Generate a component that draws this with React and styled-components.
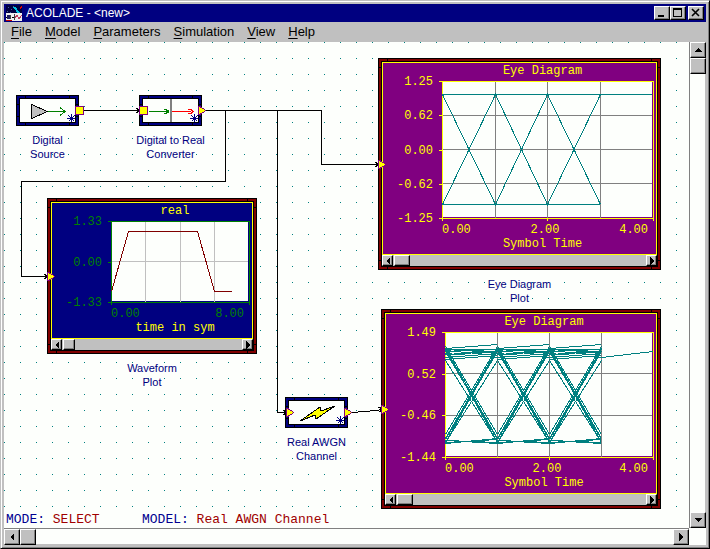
import React from 'react';
import styled, { createGlobalStyle } from 'styled-components';

const PAPER = '#fdfffc';
const SILVER = '#c0c0c0';
const NAVY = '#000080';
const MAROON = '#800000';
const TEAL = '#008080';
const YELLOW = '#ffff00';

const GlobalStyle = createGlobalStyle`
  * {
    box-sizing: border-box;
  }
  body {
    margin: 0;
    font-family: 'Liberation Sans', Arial, sans-serif;
  }
  button {
    font: inherit;
    color: inherit;
    padding: 0;
  }
  svg {
    display: block;
  }
`;

const Window = styled.div`
  display: flex;
  flex-direction: column;
  height: 100vh;
  padding: 3px;
  background: ${SILVER};
  border: 1px solid;
  border-color: ${SILVER} #000 #000 ${SILVER};
  box-shadow: inset 1px 1px #fff, inset -1px -1px #808080;
`;

const TitleBar = styled.header`
  display: flex;
  align-items: center;
  flex: none;
  height: 18px;
  padding: 0 2px;
  background: ${NAVY};
  color: #fff;
`;

const Title = styled.h1`
  flex: 1;
  margin: 0 0 0 4px;
  font-size: 12px;
  font-weight: normal;
  line-height: 16px;
`;

const Bevel = styled.button`
  display: grid;
  place-items: center;
  flex: none;
  width: ${(props) => props.$w}px;
  height: ${(props) => props.$h}px;
  background: ${SILVER};
  border: 1px solid;
  border-color: #fff #000 #000 #fff;
  box-shadow: inset -1px -1px #808080;
`;

const WindowButtons = styled.div`
  display: flex;
  & > :last-child {
    margin-left: 2px;
  }
`;

const MenuBar = styled.nav`
  display: flex;
  flex: none;
  height: 20px;
  background: ${SILVER};
`;

const MenuItem = styled.button`
  padding: 0 6px 0 7px;
  border: 0;
  background: none;
  color: #000;
  font-size: 13px;
  line-height: 18px;
  &::first-letter {
    text-decoration: underline;
    text-underline-offset: 2px;
  }
`;

const Body = styled.div`
  display: grid;
  grid-template-columns: minmax(0, 1fr) 17px;
  grid-template-rows: minmax(0, 1fr) 17px;
  flex: 1;
  min-height: 0;
  background: ${PAPER};
`;

const Workspace = styled.main`
  display: flex;
  flex-direction: column;
  min-height: 0;
`;

const Canvas = styled.div`
  position: relative;
  flex: 1;
  overflow: hidden;
  background: linear-gradient(to bottom, transparent 1px, ${PAPER} 1px) 0 0 / 16px 16px,
    linear-gradient(to right, ${TEAL} 1px, ${PAPER} 1px) 0 0 / 16px 16px;
`;

const Wires = styled.svg`
  position: absolute;
  top: 0;
  left: 0;
  pointer-events: none;
`;

const Status = styled.footer`
  display: flex;
  flex: none;
  height: 15px;
  padding-left: 2px;
  background: ${PAPER};
  color: #a00000;
  font-family: 'Liberation Mono', 'Courier New', monospace;
  font-size: 13px;
  line-height: 14px;
`;

const StatusField = styled.div`
  min-width: 136px;
  white-space: pre;
`;

const StatusName = styled.span`
  color: #000090;
`;

const Node = styled.figure`
  position: absolute;
  left: ${(props) => props.$x}px;
  top: ${(props) => props.$y}px;
  width: ${(props) => props.$w}px;
  margin: 0;
`;

const Frame = styled.div`
  padding: 2px;
  border: 1px solid #000;
  background: linear-gradient(#000, #000) 8px 0 / 1px 100% no-repeat,
    linear-gradient(#000, #000) calc(100% - 8px) 0 / 1px 100% no-repeat,
    linear-gradient(#000, #000) 0 8px / 100% 1px no-repeat,
    linear-gradient(#000, #000) 0 calc(100% - 8px) / 100% 1px no-repeat,
    ${(props) => props.$color};
`;

const Inside = styled.div`
  border: 1px solid #000;
  background: ${PAPER};
`;

const Caption = styled.figcaption`
  margin: 7px -20px 0;
  color: ${NAVY};
  font-size: 11px;
  line-height: 14px;
  text-align: center;
  white-space: pre-line;
`;

const Screen = styled.div`
  border: 1px solid ${YELLOW};
  background: ${(props) => props.$color};
`;

const ChartText = styled.text`
  font-family: 'Liberation Mono', 'Courier New', monospace;
  font-size: 12px;
`;

const MiniBar = styled.div`
  display: flex;
  height: 11px;
  background: ${SILVER};
`;

const MiniTrack = styled.div`
  flex: 1;
  padding-left: 1px;
`;

const VBar = styled.div`
  display: flex;
  flex-direction: column;
  border-left: 1px solid #808080;
  background: ${PAPER};
`;

const VTrack = styled.div`
  flex: 1;
  border-right: 1px solid ${SILVER};
`;

const HBar = styled.div`
  display: flex;
  border-top: 1px solid #808080;
`;

const HTrack = styled.div`
  flex: 1;
  border-bottom: 1px solid ${SILVER};
`;

const arrows = {
  up: '0,4 4,0 8,4',
  down: '0,0 8,0 4,4',
  left: '4,0 4,8 0,4',
  right: '0,0 4,4 0,8',
};

const Arrow = ({ dir, size = 8 }) => {
  const flat = dir === 'up' || dir === 'down';
  return (
    <svg
      width={flat ? size : size / 2}
      height={flat ? size / 2 : size}
      viewBox={flat ? '0 0 8 4' : '0 0 4 8'}
      shapeRendering="crispEdges"
    >
      <polygon points={arrows[dir]} fill="#000" />
    </svg>
  );
};

const AppIcon = () => (
  <svg width="16" height="16" viewBox="0 0 16 16" shapeRendering="crispEdges">
    <rect width="16" height="8" fill="#000040" />
    <path d="M2 2h1M5 4h1M1 6h1M7 1h1M4 7h1" stroke="#4060a0" />
    <path d="M8 2l5 6" stroke="#00c0e0" strokeWidth="2" />
    <path d="M11 1l2 2l3-3v3l-2 1z" fill="#e00000" />
    <rect y="8" width="16" height="8" fill="#f0f0f0" />
    <path d="M0 12h4M6 12h4" stroke="#000" />
    <path d="M1 10h3v4h-3z" fill="#202060" />
    <path d="M4.500 10v4M8 9v6" stroke="#404040" />
    <path d="M9 13l2-3l2 4l3-4" fill="none" stroke="#c04060" />
    <path d="M0 15.500h6" stroke="#c00000" />
  </svg>
);

const Asterisk = () => (
  <path d="M51.500 15v9M47 19.500h9M48.500 16.500l6 6M54.500 16.500l-6 6" stroke={NAVY} fill="none" />
);

const SourceIcon = () => (
  <svg width="55" height="23" shapeRendering="crispEdges">
    <path d="M11.500 5.500L27.500 12.500L11.500 19.500Z" fill={SILVER} stroke="#000" />
    <path d="M28 12.500H45M40 8.500L45 12.500L40 16.500" fill="none" stroke="#008000" />
    <Asterisk />
  </svg>
);

const ConverterIcon = () => (
  <svg width="55" height="23" shapeRendering="crispEdges">
    <path d="M6 12.500H26M21 10.500h3M21 14.500h3M23 11.500h2v2h-2" fill="none" stroke="#008000" />
    <rect x="27" width="2" height="23" fill="#808080" />
    <path d="M29 12.500H48M45 10.500h3l2 2l-2 2h-3" fill="none" stroke="#ff0000" />
    <Asterisk />
  </svg>
);

const NoiseIcon = () => (
  <svg width="55" height="23" shapeRendering="crispEdges">
    <path d="M11 20L31 6L32 10L46 5L27 18L26 14Z" fill={YELLOW} stroke="#000" />
    <Asterisk />
  </svg>
);

const Block = ({ x, y, label, children }) => (
  <Node $x={x} $y={y} $w={63}>
    <Frame $color={NAVY}>
      <Inside>{children}</Inside>
    </Frame>
    <Caption>{label}</Caption>
  </Node>
);

const LEFT = 60;
const TOP = 19;

const Plot = ({ x, y, w, h, label, title, xTitle, color, ink, textInk, grid, gridX, gridY, yLabels, xLabels, thumb, children }) => {
  const boxW = w - 8;
  const boxH = h - 19;
  const right = boxW - 4;
  const bottom = boxH - 37;
  const middle = (LEFT + right) / 2 - 5;
  const marks = yLabels.map((_, i) => Math.round(TOP + ((bottom - TOP) * i) / (yLabels.length - 1)));

  return (
    <Node $x={x} $y={y} $w={w}>
      <Frame $color={MAROON}>
        <Inside>
          <Screen $color={color}>
            <svg width={boxW - 2} height={boxH - 2} viewBox={`1 1 ${boxW - 2} ${boxH - 2}`} shapeRendering="crispEdges">
              <rect x={LEFT} y={TOP} width={right - LEFT - 1} height={bottom - TOP - 1} fill={PAPER} />
              <g stroke={grid}>
                {gridX.map((gx) => (
                  <path key={gx} d={`M${gx + 0.5} ${TOP}V${bottom + 1}`} />
                ))}
                {gridY.map((gy) => (
                  <path key={gy} d={`M${LEFT} ${gy + 0.5}H${right - 1}`} />
                ))}
              </g>
              <g fill="none" stroke={ink}>
                <path d={`M${LEFT + 0.5} ${bottom + 3}V${TOP + 0.5}H${right + 0.5}V${bottom + 3}`} />
                <path d={`M${LEFT - 3} ${bottom + 0.5}H${right + 1}`} />
                {marks.map((m) => (
                  <path key={m} d={`M${LEFT - 3} ${m + 0.5}h3`} />
                ))}
                {xLabels.length === 3 && <path d={`M${gridX[1] + 0.5} ${bottom}v3`} />}
              </g>
              {children}
              <g fill={textInk || ink}>
                <ChartText x={middle} y={12} textAnchor="middle">{title}</ChartText>
                <ChartText x={middle} y={bottom + 29} textAnchor="middle">{xTitle}</ChartText>
              </g>
              <g fill={ink}>
                {yLabels.map((text, i) => (
                  <ChartText key={text} x={51} y={marks[i] + 4} textAnchor="end">{text}</ChartText>
                ))}
                <ChartText x={LEFT} y={bottom + 15}>{xLabels[0]}</ChartText>
                {xLabels.length === 3 && (
                  <ChartText x={gridX[1] - 2} y={bottom + 15} textAnchor="middle">{xLabels[1]}</ChartText>
                )}
                <ChartText x={right - 5} y={bottom + 15} textAnchor="end">{xLabels[xLabels.length - 1]}</ChartText>
              </g>
            </svg>
          </Screen>
          <MiniBar>
            <Bevel $w={11} $h={11} aria-label="Scroll left"><Arrow dir="left" size={8} /></Bevel>
            <MiniTrack>
              <Bevel as="div" $w={thumb} $h={11} />
            </MiniTrack>
            <Bevel $w={11} $h={11} aria-label="Scroll right"><Arrow dir="right" size={8} /></Bevel>
          </MiniBar>
        </Inside>
      </Frame>
      {label && <Caption>{label}</Caption>}
    </Node>
  );
};

// start and end level of each noisy trace inside one symbol
const high = [[36, 36], [36, 39], [38, 36], [37, 42], [41, 38], [40, 44], [44, 40], [46, 42], [35, 31]];
const low = [[130, 125], [129, 126], [127, 129], [127, 130]];
const cross = [[33, 121], [35, 125], [36, 129], [38, 126], [47, 129]];

const noisyPath = [60, 112, 164]
  .map((x) =>
    [...high, ...low, ...cross, ...cross.map(([a, b]) => [b, a])]
      .map(([a, b]) => `M${x + 0.5} ${a + 0.5}L${x + 52.5} ${b + 0.5}`)
      .join('')
  )
  .join('');

const SquarePort = ({ x, y }) => (
  <rect x={x + 0.5} y={y + 0.5} width="8" height="8" fill={YELLOW} stroke="#800080" />
);

const ArrowPort = ({ x, y }) => (
  <g>
    <polygon points={`${x},${y - 4} ${x + 2},${y - 4} ${x + 8},${y} ${x + 8},${y + 1} ${x + 2},${y + 5} ${x},${y + 5}`} fill="#800080" />
    <polygon points={`${x + 1},${y - 3} ${x + 7},${y} ${x + 7},${y + 1} ${x + 1},${y + 4}`} fill={YELLOW} />
  </g>
);

const menus = ['File', 'Model', 'Parameters', 'Simulation', 'View', 'Help'];

const App = () => {
  return (
    <Window>
      <GlobalStyle />
      <TitleBar>
        <AppIcon />
        <Title>ACOLADE - &lt;new&gt;</Title>
        <WindowButtons>
          <Bevel $w={16} $h={14} aria-label="Minimize">
            <svg width="12" height="10"><rect x="2" y="7" width="6" height="2" /></svg>
          </Bevel>
          <Bevel $w={16} $h={14} aria-label="Maximize">
            <svg width="12" height="10" shapeRendering="crispEdges">
              <path d="M1.500 0.500h8v8h-8zM1.500 1.500h8" fill="none" stroke="#000" />
            </svg>
          </Bevel>
          <Bevel $w={16} $h={14} aria-label="Close">
            <svg width="12" height="10"><path d="M2 1l7 7M9 1l-7 7" stroke="#000" strokeWidth="1.600" /></svg>
          </Bevel>
        </WindowButtons>
      </TitleBar>
      <MenuBar>
        {menus.map((name) => (
          <MenuItem key={name}>{name}</MenuItem>
        ))}
      </MenuBar>
      <Body>
        <Workspace>
          <Canvas>
            <Block x={12} y={53} label={'Digital\nSource'}><SourceIcon /></Block>
            <Block x={135} y={53} label={'Digital to Real\nConverter'}><ConverterIcon /></Block>
            <Block x={281} y={355} label={'Real AWGN\nChannel'}><NoiseIcon /></Block>
            <Plot
              x={43} y={156} w={210} h={156}
              label={'Waveform\nPlot'}
              title="real" xTitle="time in sym"
              color={NAVY} ink="#008000" textInk={YELLOW} grid={SILVER}
              gridX={[94, 129, 163]} gridY={[59]}
              yLabels={['1.33', '0.00', '-1.33']} xLabels={['0.00', '8.00']}
              thumb={12}
            >
              <path d="M60.500 89.500L77.500 29.500H146.500L163.500 89.500H181" fill="none" stroke={MAROON} />
            </Plot>
            <Plot
              x={374} y={16} w={283} h={212}
              label={'Eye Diagram\nPlot'}
              title="Eye Diagram" xTitle="Symbol Time"
              color="#800080" ink={YELLOW} grid="#808080"
              gridX={[113, 165, 218]} gridY={[53, 87, 121]}
              yLabels={['1.25', '0.62', '0.00', '-0.62', '-1.25']} xLabels={['0.00', '2.00', '4.00']}
              thumb={16}
            >
              <path
                d="M60 32.500H270M60 142.500H218M60.500 32.500L113.500 142.500L165.500 32.500L218.500 142.500M60.500 142.500L113.500 32.500L165.500 142.500L218.500 32.500"
                fill="none"
                stroke={TEAL}
              />
            </Plot>
            <Plot
              x={377} y={267} w={280} h={200}
              title="Eye Diagram" xTitle="Symbol Time"
              color="#800080" ink={YELLOW} grid="#808080"
              gridX={[112, 164, 216]} gridY={[60, 102]}
              yLabels={['1.49', '0.52', '-0.46', '-1.44']} xLabels={['0.00', '2.00', '4.00']}
              thumb={16}
            >
              <path d={`${noisyPath}M216.500 44.500L268 38.500`} fill="none" stroke={TEAL} />
            </Plot>
            <Wires width="685" height="471" shapeRendering="crispEdges">
              <g fill="none" stroke="#000">
                <path d="M80 68.500H135M202 68.500H317.500V122.500H374" />
                <path d="M221.500 68.500V139.500H17.500V234.500H43" />
                <path d="M273.500 68.500V370.500H282M348 370.500L372 368.500L378 367.500" />
                <path d="M132 66.500h1l2 2l-2 2h-1M371 120.500h1l2 2l-2 2h-1M40 232.500h1l2 2l-2 2h-1" />
                <path d="M279 368.500h1l2 2l-2 2h-1M374 365.500h2l2 2l-2 2h-1" />
              </g>
              <SquarePort x={71} y={64} />
              <SquarePort x={135} y={64} />
              <ArrowPort x={194} y={68} />
              <ArrowPort x={43} y={234} />
              <ArrowPort x={374} y={122} />
              <ArrowPort x={282} y={370} />
              <ArrowPort x={340} y={370} />
              <ArrowPort x={377} y={367} />
            </Wires>
          </Canvas>
          <Status>
            <StatusField><StatusName>MODE:</StatusName> SELECT</StatusField>
            <StatusField><StatusName>MODEL:</StatusName> Real AWGN Channel</StatusField>
          </Status>
        </Workspace>
        <VBar>
          <Bevel $w={16} $h={16} aria-label="Scroll up"><Arrow dir="up" /></Bevel>
          <Bevel as="div" $w={16} $h={16} />
          <VTrack />
          <Bevel $w={16} $h={16} aria-label="Scroll down"><Arrow dir="down" /></Bevel>
        </VBar>
        <HBar>
          <Bevel $w={16} $h={16} aria-label="Scroll left"><Arrow dir="left" /></Bevel>
          <Bevel as="div" $w={16} $h={16} />
          <HTrack />
          <Bevel $w={16} $h={16} aria-label="Scroll right"><Arrow dir="right" /></Bevel>
        </HBar>
      </Body>
    </Window>
  );
};

export default App;
